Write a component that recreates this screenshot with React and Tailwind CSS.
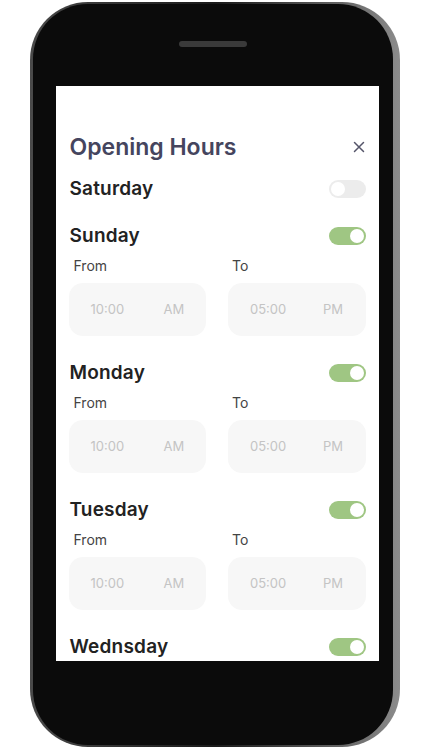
const days = [
  { name: 'Saturday', on: false, hours: false, gap: 'mt-[12px]' },
  { name: 'Sunday', on: true, hours: true, gap: 'mt-[19px]' },
  { name: 'Monday', on: true, hours: true, gap: 'mt-[23px]' },
  { name: 'Tuesday', on: true, hours: true, gap: 'mt-[23px]' },
  { name: 'Wednsday', on: true, hours: false, gap: 'mt-[23px]' },
];

function Toggle({ on }) {
  return (
    <div
      className={
        on
          ? 'flex h-[18px] w-[37px] items-center justify-end rounded-full bg-[#9fc683] px-[2px]'
          : 'flex h-[18px] w-[37px] items-center justify-start rounded-full bg-[#ececec] px-[2px]'
      }
    >
      <div className="h-[14px] w-[14px] rounded-full bg-white" />
    </div>
  );
}

function TimeBox({ time, period }) {
  return (
    <div className="flex h-[53px] items-center rounded-[14px] bg-[#f7f7f7] pl-[22px] text-[13px] text-[#c4c4c4]">
      <span className="w-[73px]">{time}</span>
      <span>{period}</span>
    </div>
  );
}

function Day({ day }) {
  return (
    <div className={day.gap}>
      <div className="flex h-[28px] items-center justify-between">
        <span className="pl-px text-[19px] font-semibold tracking-[0.2px] text-[#222]">{day.name}</span>
        <Toggle on={day.on} />
      </div>
      {day.hours && (
        <>
          <div className="mt-[5px] grid h-[20px] grid-cols-2 items-center gap-[22px] text-[14px] text-[#444]">
            <span className="pl-[5px]">From</span>
            <span className="pl-[4px]">To</span>
          </div>
          <div className="mt-[8px] grid grid-cols-2 gap-[22px]">
            <TimeBox time="10:00" period="AM" />
            <TimeBox time="05:00" period="PM" />
          </div>
        </>
      )}
    </div>
  );
}

export default function App() {
  return (
    <div className="h-[750px] w-[422px] bg-white pt-[2px] pl-[30px]" style={{ fontFamily: 'Inter, "Liberation Sans", sans-serif' }}>
      <div className="h-[745px] w-[370px] rounded-[58px] bg-gradient-to-r from-[#4a4a4a] via-[#1a1a1a] to-[#8c8c8c] pt-[2px] pr-[7px] pb-[2px] pl-[3px]">
        <div className="flex h-full flex-col items-center rounded-[55px] bg-[#0b0b0b]">
          <div className="mt-[37px] h-[6px] w-[68px] rounded-full bg-[#3a3a3a]" />
          <div className="mt-[39px] mr-[-8px] h-[575px] w-[323px] overflow-hidden bg-white px-[13px] pt-[45px]">
            <div className="flex h-[32px] items-center justify-between">
              <h1 className="pl-px text-[23px] font-semibold text-[#45455e]">Opening Hours</h1>
              <svg width="12" height="12" viewBox="0 0 12 12" className="mr-[1px]">
                <path d="M1.5 1.5 L10.5 10.5 M10.5 1.5 L1.5 10.5" stroke="#55556a" strokeWidth="1.5" strokeLinecap="round" />
              </svg>
            </div>
            {days.map((d) => (
              <Day key={d.name} day={d} />
            ))}
          </div>
        </div>
      </div>
    </div>
  );
}
